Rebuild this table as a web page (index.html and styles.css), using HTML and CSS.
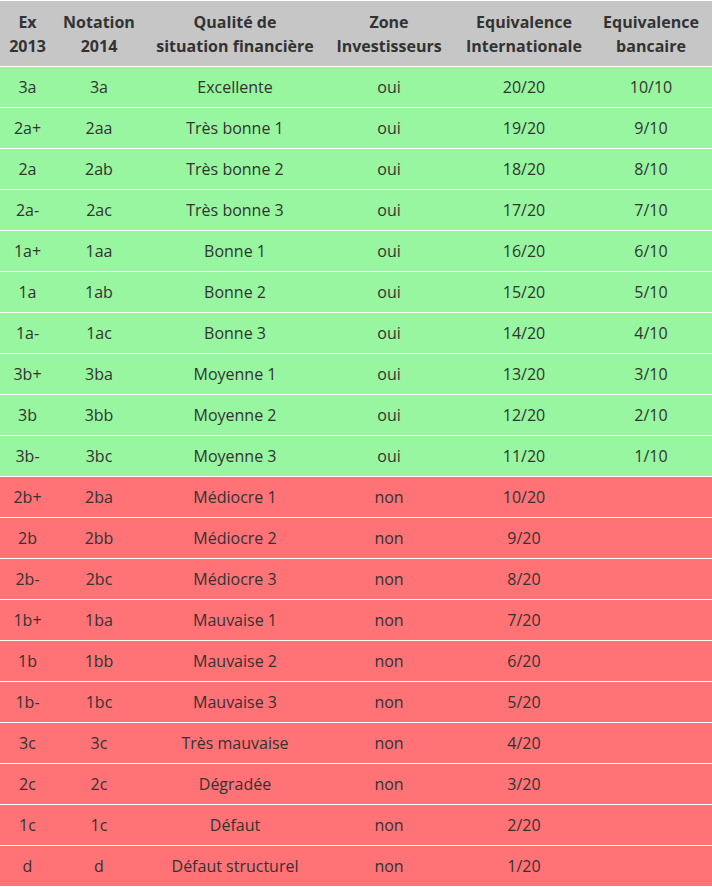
FILE: index.html
```html
<!DOCTYPE html>
<html lang="fr">
<head>
<meta charset="utf-8">
<title>Notation</title>
<link rel="stylesheet" href="styles.css">
</head>
<body>
<table class="grid">
  <colgroup>
    <col class="c1"><col class="c2"><col class="c3"><col class="c4"><col class="c5"><col class="c6">
  </colgroup>
  <thead>
    <tr><th>Ex<br>2013</th><th>Notation<br>2014</th><th>Qualité de<br>situation financière</th><th>Zone<br>Investisseurs</th><th>Equivalence<br>Internationale</th><th>Equivalence<br>bancaire</th></tr>
  </thead>
  <tbody>
    <tr class="ok"><td>3a</td><td>3a</td><td>Excellente</td><td>oui</td><td>20/20</td><td>10/10</td></tr>
    <tr class="ok"><td>2a+</td><td>2aa</td><td>Très bonne 1</td><td>oui</td><td>19/20</td><td>9/10</td></tr>
    <tr class="ok"><td>2a</td><td>2ab</td><td>Très bonne 2</td><td>oui</td><td>18/20</td><td>8/10</td></tr>
    <tr class="ok"><td>2a-</td><td>2ac</td><td>Très bonne 3</td><td>oui</td><td>17/20</td><td>7/10</td></tr>
    <tr class="ok"><td>1a+</td><td>1aa</td><td>Bonne 1</td><td>oui</td><td>16/20</td><td>6/10</td></tr>
    <tr class="ok"><td>1a</td><td>1ab</td><td>Bonne 2</td><td>oui</td><td>15/20</td><td>5/10</td></tr>
    <tr class="ok"><td>1a-</td><td>1ac</td><td>Bonne 3</td><td>oui</td><td>14/20</td><td>4/10</td></tr>
    <tr class="ok"><td>3b+</td><td>3ba</td><td>Moyenne 1</td><td>oui</td><td>13/20</td><td>3/10</td></tr>
    <tr class="ok"><td>3b</td><td>3bb</td><td>Moyenne 2</td><td>oui</td><td>12/20</td><td>2/10</td></tr>
    <tr class="ok"><td>3b-</td><td>3bc</td><td>Moyenne 3</td><td>oui</td><td>11/20</td><td>1/10</td></tr>
    <tr class="ko"><td>2b+</td><td>2ba</td><td>Médiocre 1</td><td>non</td><td>10/20</td><td></td></tr>
    <tr class="ko"><td>2b</td><td>2bb</td><td>Médiocre 2</td><td>non</td><td>9/20</td><td></td></tr>
    <tr class="ko"><td>2b-</td><td>2bc</td><td>Médiocre 3</td><td>non</td><td>8/20</td><td></td></tr>
    <tr class="ko"><td>1b+</td><td>1ba</td><td>Mauvaise 1</td><td>non</td><td>7/20</td><td></td></tr>
    <tr class="ko"><td>1b</td><td>1bb</td><td>Mauvaise 2</td><td>non</td><td>6/20</td><td></td></tr>
    <tr class="ko"><td>1b-</td><td>1bc</td><td>Mauvaise 3</td><td>non</td><td>5/20</td><td></td></tr>
    <tr class="ko"><td>3c</td><td>3c</td><td>Très mauvaise</td><td>non</td><td>4/20</td><td></td></tr>
    <tr class="ko"><td>2c</td><td>2c</td><td>Dégradée</td><td>non</td><td>3/20</td><td></td></tr>
    <tr class="ko"><td>1c</td><td>1c</td><td>Défaut</td><td>non</td><td>2/20</td><td></td></tr>
    <tr class="ko"><td>d</td><td>d</td><td>Défaut structurel</td><td>non</td><td>1/20</td><td></td></tr>
  </tbody>
</table>
</body>
</html>
```
FILE: styles.css
```css
html, body {
  margin: 0;
  padding: 0;
  background: #ffffff;
}
body {
  font-family: "Open Sans", "Liberation Sans", sans-serif;
  font-size: 16px;
  color: #333333;
}
.grid {
  width: 712px;
  border-collapse: collapse;
  table-layout: fixed;
}
.c1 { width: 55px; }
.c2 { width: 88px; }
.c3 { width: 184px; }
.c4 { width: 124px; }
.c5 { width: 146px; }
.c6 { width: 115px; }
.grid th,
.grid td {
  text-align: center;
  line-height: 24px;
  border-top: 1px solid #ffffff;
  padding: 0;
  white-space: nowrap;
}
.grid th:last-child,
.grid td:last-child {
  padding-right: 7px;
}
.grid th {
  background: #c6c6c6;
  font-weight: 700;
  height: 65px;
}
.grid td {
  height: 40px;
}
.ok td { background: #97f69f; }
.ko td { background: #ff7276; }
```
